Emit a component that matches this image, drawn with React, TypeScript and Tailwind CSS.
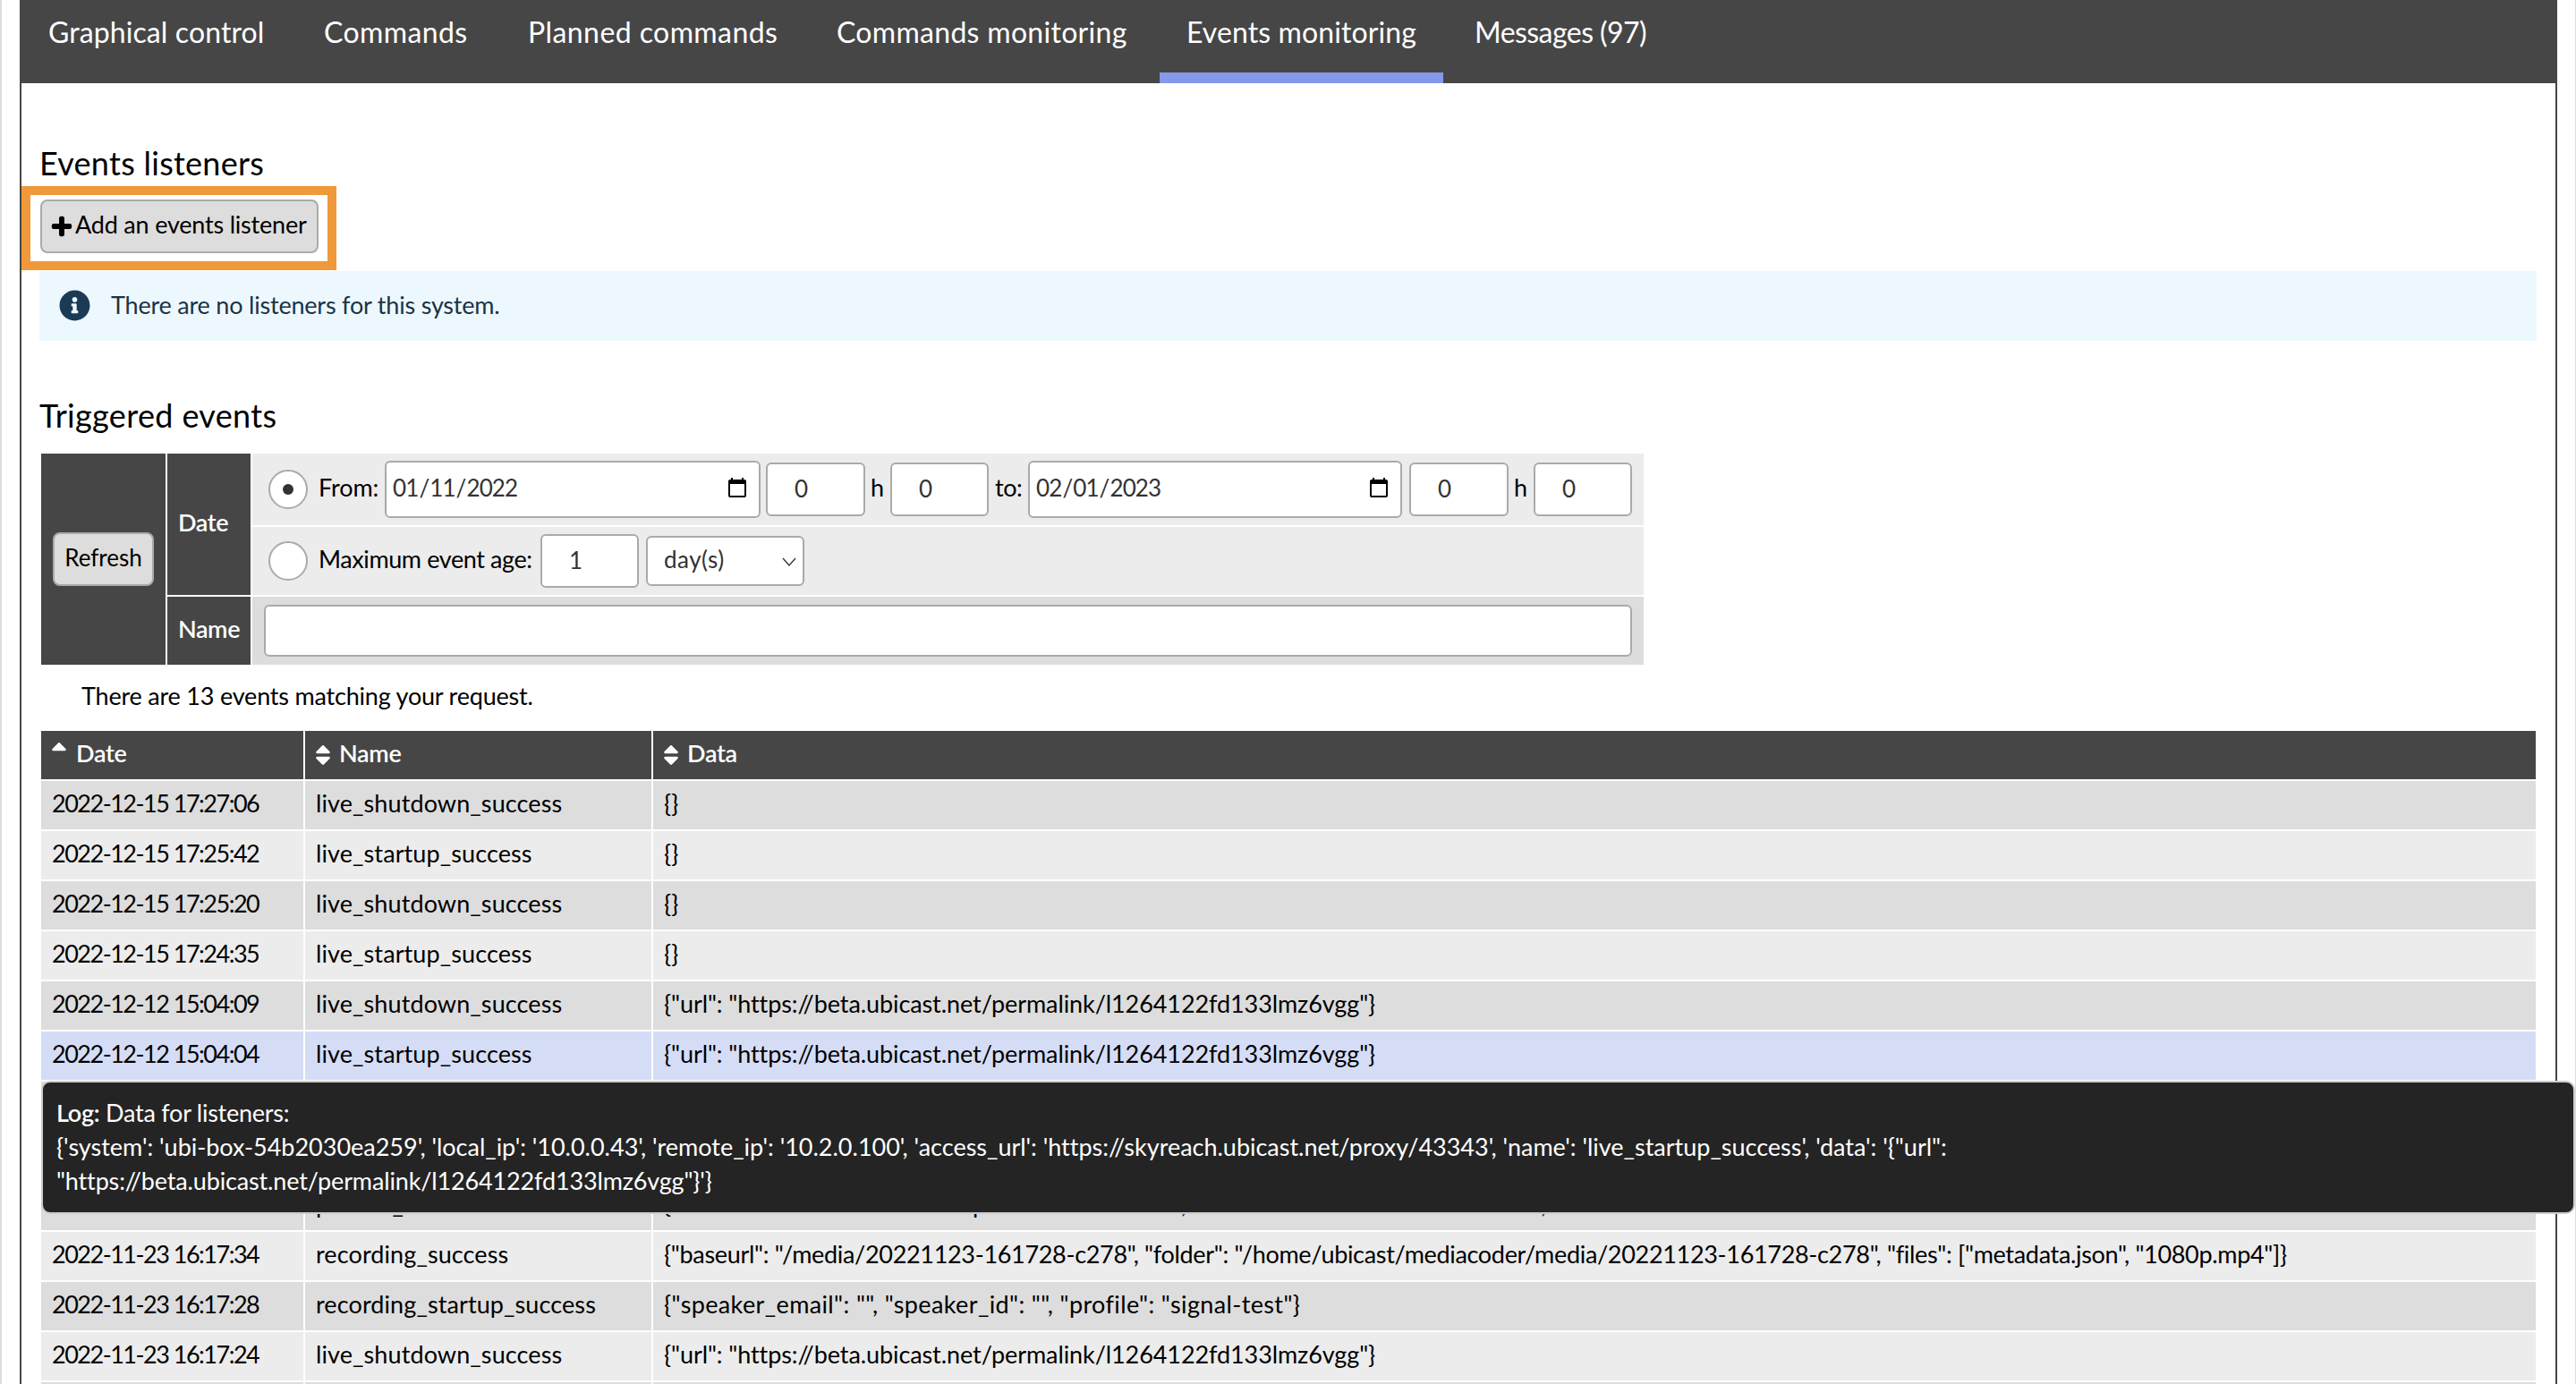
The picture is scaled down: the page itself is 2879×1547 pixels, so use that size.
import React from "react";
import { FaPlus, FaInfoCircle, FaSort, FaSortUp } from "react-icons/fa";

const URL_DATA = '{"url": "https://beta.ubicast.net/permalink/l1264122fd133lmz6vgg"}';
const URL_T = "tracking-[-0.09px]";

const rows: { date: string; name: string; data: string; bg: string; t?: string }[] = [
  { date: "2022-12-15 17:27:06", name: "live_shutdown_success", data: "{}", bg: "bg-[#dddddd]" },
  { date: "2022-12-15 17:25:42", name: "live_startup_success", data: "{}", bg: "bg-[#ececec]" },
  { date: "2022-12-15 17:25:20", name: "live_shutdown_success", data: "{}", bg: "bg-[#dddddd]" },
  { date: "2022-12-15 17:24:35", name: "live_startup_success", data: "{}", bg: "bg-[#ececec]" },
  { date: "2022-12-12 15:04:09", name: "live_shutdown_success", data: URL_DATA, bg: "bg-[#dddddd]", t: URL_T },
  { date: "2022-12-12 15:04:04", name: "live_startup_success", data: URL_DATA, bg: "bg-[#d5ddf6]", t: URL_T },
  { date: "", name: "", data: "", bg: "bg-[#dddddd]" },
  { date: "", name: "", data: "", bg: "bg-[#ececec]" },
  { date: "", name: "publish_success", data: '{"status": "stream in full 1080p resolution on live", "duration": "100 seconds in total", "source": "main"', bg: "bg-[#dddddd]" },
  {
    date: "2022-11-23 16:17:34",
    name: "recording_success",
    data: '{"baseurl": "/media/20221123-161728-c278", "folder": "/home/ubicast/mediacoder/media/20221123-161728-c278", "files": ["metadata.json", "1080p.mp4"]}',
    bg: "bg-[#ececec]",
    t: "tracking-[-0.32px]",
  },
  {
    date: "2022-11-23 16:17:28",
    name: "recording_startup_success",
    data: '{"speaker_email": "", "speaker_id": "", "profile": "signal-test"}',
    bg: "bg-[#dddddd]",
    t: "tracking-[0.37px]",
  },
  { date: "2022-11-23 16:17:24", name: "live_shutdown_success", data: URL_DATA, bg: "bg-[#ececec]", t: URL_T },
  { date: "", name: "", data: "", bg: "bg-[#dddddd]" },
];

const tabs = [
  { label: "Graphical control", w: "w-[301px]", t: "tracking-[0.1px]" },
  { label: "Commands", w: "w-[221px]", t: "tracking-[0.4px]" },
  { label: "Planned commands", w: "w-[338px]", t: "tracking-[0.42px]" },
  { label: "Commands monitoring", w: "w-[384px]", t: "tracking-[0.3px]" },
  { label: "Events monitoring", w: "w-[317px]", t: "tracking-[0.1px]", active: true },
  { label: "Messages (97)", w: "-ml-[2px] w-[251px]", t: "tracking-[-0.55px]" },
];

const numInput =
  "h-[60px] rounded-[6px] border-2 border-[#aaaaaa] bg-white pb-[3px] pl-[30px] text-[26px] tracking-[-0.9px] text-[#333333] outline-none";
const dateInput =
  "h-[64px] rounded-[6px] border-2 border-[#aaaaaa] bg-white pb-[3px] pl-[6px] pr-[9px] text-[26px] tracking-[-0.9px] text-[#333333] outline-none";

function Radio({ checked }: { checked?: boolean }) {
  return (
    <span className="flex h-[44px] w-[44px] shrink-0 items-center justify-center rounded-full border-2 border-[#aaaaaa] bg-white">
      {checked && <span className="h-[12px] w-[12px] rounded-full bg-[#333333]" />}
    </span>
  );
}

export default function App() {
  return (
    <div className="relative h-[1547px] w-[2879px] overflow-hidden border-l-2 border-r border-[#dddddd] bg-white font-[Lato,sans-serif] text-black">
      <div className="ml-[20px] h-[1547px] w-[2836px] border-x-2 border-[#464646]">
        <nav className="-mx-[2px] flex h-[93px] gap-[7px] bg-[#464646] pl-[2px] text-[32px] text-white">
          {tabs.map((t) => (
            <div
              key={t.label}
              className={`${t.w} ${t.t} h-[93px] pl-[30px] pt-[17px] leading-[38px] ${t.active ? "border-b-[12px] border-[#8598ea]" : ""}`}
            >
              {t.label}
            </div>
          ))}
        </nav>

        <main className="px-[22px]">
          <h2 className="-ml-[2px] mt-[64px] h-[50px] text-[36px] leading-[50px] tracking-[0.27px]">Events listeners</h2>

          <div className="relative -ml-[1px] mt-[16px] h-[60px]">
            <button className="flex h-[60px] w-[311px] items-center rounded-[8px] border-2 border-[#aaaaaa] bg-[#dddddd] pb-[3px] pl-[10px] text-[27px] tracking-[-0.2px]">
              <FaPlus className="mr-[3px] mt-[2px] h-[24px] w-[24px] shrink-0" stroke="currentColor" strokeWidth={30} />
              Add an events listener
            </button>
            <div className="pointer-events-none absolute -left-[21px] -top-[15px] h-[94px] w-[352px] border-[10px] border-[#f0993a]" />
          </div>

          <div className="-ml-[2px] -mr-[1px] mt-[20px] flex h-[78px] items-center bg-[#edf8fe] pb-[2px] pl-[22px] text-[27px] tracking-[-0.2px] text-[#1b3347]">
            <FaInfoCircle className="mr-[23px] h-[35px] w-[35px] shrink-0 text-[#1b3a55]" />
            There are no listeners for this system.
          </div>

          <h2 className="-ml-[2px] mt-[58px] h-[50px] text-[36px] leading-[50px] tracking-[0.35px]">Triggered events</h2>

          <div className="mt-[18px] flex h-[236px] w-[1791px] gap-[2px] text-[27px] tracking-[-0.4px]">
            <div className="flex w-[139px] shrink-0 items-center justify-center bg-[#464646]">
              <button className="h-[60px] w-[113px] rounded-[8px] border-2 border-[#aaaaaa] bg-[#dddddd] pb-[3px] text-center text-[26px] tracking-[0px]">
                Refresh
              </button>
            </div>
            <div className="flex flex-1 flex-col gap-[2px]">
              <div className="flex h-[158px] gap-[2px]">
                <div className="flex w-[93px] shrink-0 items-center bg-[#464646] pb-[3px] pl-[12px] font-semibold text-white">Date</div>
                <div className="flex flex-1 flex-col gap-[2px]">
                  <div className="flex h-[80px] items-center bg-[#ececec] pl-[18px]">
                    <Radio checked />
                    <span className="ml-[12px] w-[74px] shrink-0 pb-[3px] tracking-[-0.1px]">From:</span>
                    <input type="date" defaultValue="2022-01-11" className={`${dateInput} w-[420px]`} />
                    <input type="text" defaultValue="0" className={`${numInput} ml-[6px] w-[111px]`} />
                    <span className="w-[28px] shrink-0 pb-[3px] pl-[6px]">h</span>
                    <input type="text" defaultValue="0" className={`${numInput} w-[110px]`} />
                    <span className="w-[44px] shrink-0 pb-[3px] pl-[7px]">to:</span>
                    <input type="date" defaultValue="2023-02-01" className={`${dateInput} w-[418px]`} />
                    <input type="text" defaultValue="0" className={`${numInput} ml-[8px] w-[111px]`} />
                    <span className="w-[28px] shrink-0 pb-[3px] pl-[6px]">h</span>
                    <input type="text" defaultValue="0" className={`${numInput} w-[110px]`} />
                  </div>
                  <div className="flex h-[76px] items-center bg-[#ececec] pl-[18px]">
                    <Radio />
                    <span className="ml-[12px] w-[248px] shrink-0 pb-[3px]">Maximum event age:</span>
                    <input type="text" defaultValue="1" className={`${numInput} w-[110px]`} />
                    <div className="relative ml-[8px] h-[56px] w-[177px]">
                      <select className="h-[56px] w-[177px] appearance-none rounded-[6px] border-2 border-[#aaaaaa] bg-white pb-[3px] pl-[18px] text-[26px] tracking-[0.5px] text-[#333333] outline-none">
                        <option>day(s)</option>
                      </select>
                      <svg viewBox="0 0 16 10" className="pointer-events-none absolute right-[9px] top-[24px] h-[10px] w-[16px]" fill="none" stroke="#333333" strokeWidth="1.3">
                        <path d="M1 1l7 8 7-8" />
                      </svg>
                    </div>
                  </div>
                </div>
              </div>
              <div className="flex h-[76px] gap-[2px]">
                <div className="flex w-[93px] shrink-0 items-center bg-[#464646] pb-[3px] pl-[12px] font-semibold text-white">Name</div>
                <div className="flex flex-1 items-center bg-[#dddddd] pl-[13px]">
                  <input type="text" className="h-[58px] w-[1529px] rounded-[6px] border-2 border-[#aaaaaa] bg-white outline-none" />
                </div>
              </div>
            </div>
          </div>

          <p className="ml-[45px] mt-[15px] h-[40px] text-[27px] leading-[40px] tracking-[-0.2px]">
            There are 13 events matching your request.
          </p>

          <div className="mt-[19px] grid grid-cols-[293px_387px_1fr] gap-[2px] text-[27px]">
            <div className="flex h-[54px] items-center bg-[#464646] pb-[3px] pl-[11px] font-semibold tracking-[-0.3px] text-white">
              <FaSortUp className="-mt-[3px] mr-[10px] h-[28px] w-[18px]" />
              Date
            </div>
            <div className="flex h-[54px] items-center bg-[#464646] pb-[3px] pl-[11px] font-semibold tracking-[-0.3px] text-white">
              <FaSort className="mr-[9px] mt-[3px] h-[28px] w-[18px]" />
              Name
            </div>
            <div className="flex h-[54px] items-center bg-[#464646] pb-[3px] pl-[11px] font-semibold tracking-[-0.3px] text-white">
              <FaSort className="mr-[9px] mt-[3px] h-[28px] w-[18px]" />
              Data
            </div>
            {rows.map((r, i) => (
              <React.Fragment key={i}>
                <div className={`flex h-[54px] items-center whitespace-nowrap pb-[3px] pl-[12px] tracking-[-1.5px] ${r.bg}`}>{r.date}</div>
                <div className={`flex h-[54px] items-center whitespace-nowrap pb-[3px] pl-[12px] tracking-[0.1px] ${r.bg}`}>{r.name}</div>
                <div className={`flex h-[54px] items-center whitespace-nowrap pb-[3px] pl-[12px] ${r.t ?? "tracking-[0px]"} ${r.bg}`}>{r.data}</div>
              </React.Fragment>
            ))}
          </div>
        </main>
      </div>

      <div className="absolute left-[44px] top-[1208px] h-[149px] w-[2832px] rounded-[10px] border-2 border-[#cccccc] bg-[#242424] pl-[15px] pt-[15px] text-[27px] leading-[38px] text-white">
        <div className="whitespace-nowrap tracking-[-0.25px]">
          <span className="font-semibold">Log:</span> Data for listeners:
        </div>
        <div className="whitespace-nowrap tracking-[-0.01px]">
          {"{'system': 'ubi-box-54b2030ea259', 'local_ip': '10.0.0.43', 'remote_ip': '10.2.0.100', 'access_url': 'https://skyreach.ubicast.net/proxy/43343', 'name': 'live_startup_success', 'data': '{\"url\":"}
        </div>
        <div className="whitespace-nowrap tracking-[-0.15px]">{"\"https://beta.ubicast.net/permalink/l1264122fd133lmz6vgg\"}'}"}</div>
      </div>
    </div>
  );
}
